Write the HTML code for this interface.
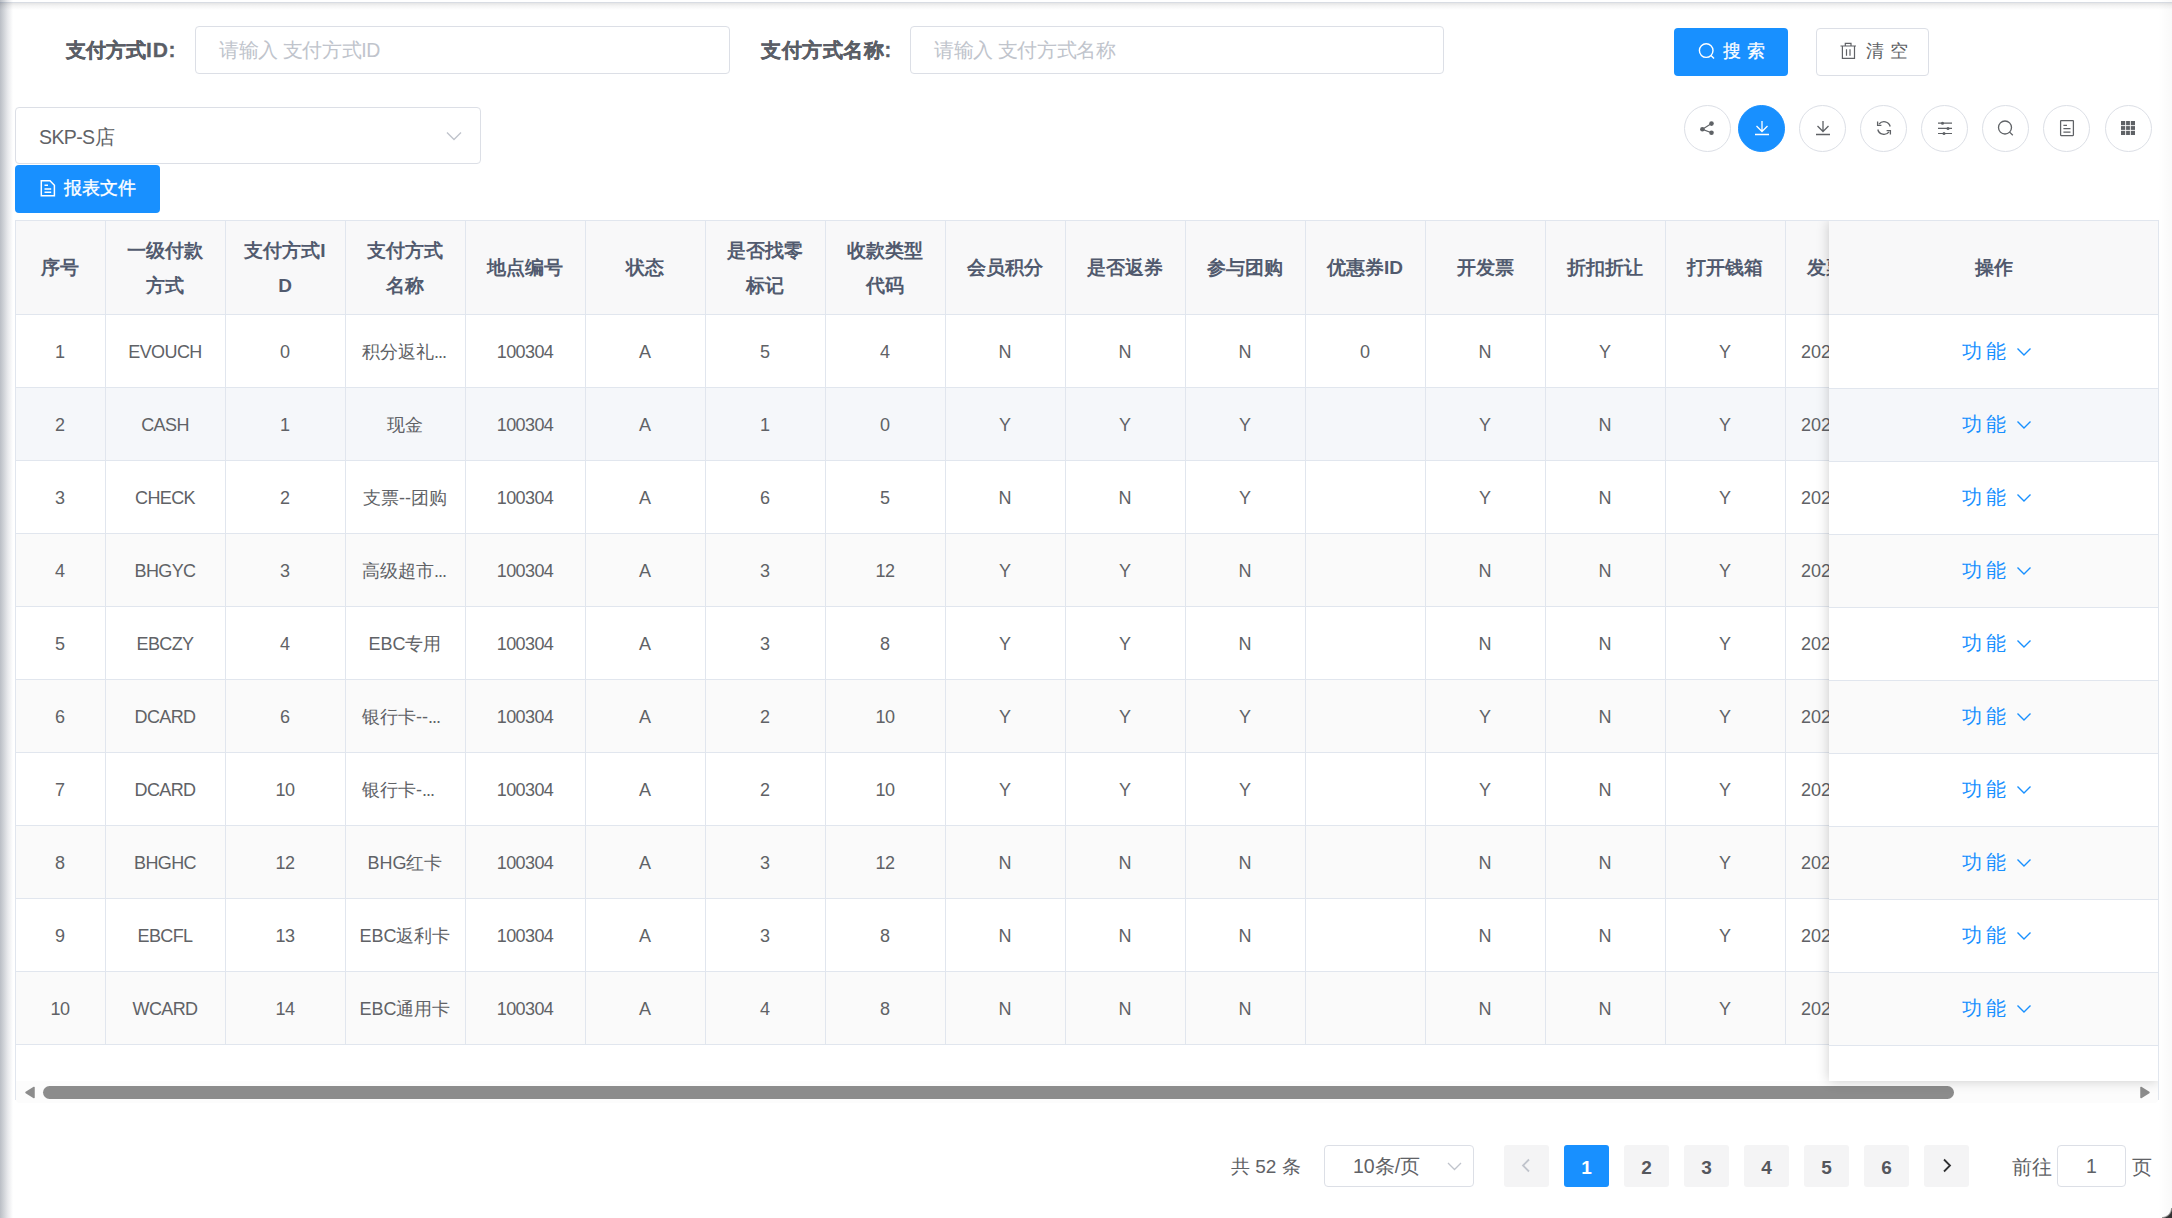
<!DOCTYPE html><html><head><meta charset="utf-8"><style>
*{box-sizing:border-box;margin:0;padding:0}
html,body{width:2172px;height:1218px;overflow:hidden;background:#fff;font-family:"Liberation Sans",sans-serif;color:#606266}
.abs{position:absolute}
.lbl{position:absolute;font-size:20px;font-weight:bold;color:#5a5e66;-webkit-text-stroke:0.3px #5a5e66;line-height:24px;white-space:nowrap}
.inp{position:absolute;border:1px solid #dcdfe6;border-radius:4px;background:#fff}
.ph{position:absolute;font-size:19.5px;color:#c0c4cc;line-height:24px;white-space:nowrap;letter-spacing:-0.4px}
.btn{position:absolute;border-radius:4px;font-size:19.5px;line-height:24px;white-space:nowrap}
.circ{position:absolute;top:105px;width:47px;height:47px;border:1px solid #dcdfe6;border-radius:50%;background:#fff}
.circ svg{position:absolute;left:50%;top:50%;transform:translate(-50%,-50%)}
.vl{position:absolute;width:1px;background:#e1e6ee}
.hl{position:absolute;height:1px;background:#e1e6ee}
.th{position:absolute;text-align:center;font-size:19px;font-weight:bold;color:#515a6e;line-height:35px;white-space:nowrap}
.td{position:absolute;text-align:center;font-size:18px;color:#606266;line-height:24px;white-space:nowrap}
.pg{position:absolute;top:1145px;width:45px;height:42px;background:#f4f4f5;border-radius:3px;text-align:center;font-size:19px;font-weight:bold;line-height:45px;color:#54575d}
</style></head><body>
<div class="lbl" style="left:66px;top:38px">支付方式<span style="letter-spacing:0.8px;font-size:21px">ID:</span></div>
<div class="inp" style="left:195px;top:26px;width:535px;height:48px"></div>
<div class="ph" style="left:219px;top:38px">请输入 支付方式ID</div>
<div class="lbl" style="left:761px;top:38px;letter-spacing:0.6px">支付方式名称<span style="letter-spacing:1px">:</span></div>
<div class="inp" style="left:910px;top:26px;width:534px;height:48px"></div>
<div class="ph" style="left:934px;top:38px">请输入 支付方式名称</div>
<div class="btn" style="left:1674px;top:28px;width:114px;height:48px;background:#1890ff"></div>
<svg class="abs" style="left:1698px;top:42px" width="18" height="18" viewBox="0 0 18 18"><circle cx="8.2" cy="8.6" r="6.8" fill="none" stroke="#fff" stroke-width="1.4"/><path d="M13 13.4L16 16.6" stroke="#fff" stroke-width="1.4"/></svg>
<div class="btn" style="left:1723px;top:39px;color:#fff;letter-spacing:5.5px;font-size:17.5px;font-weight:400;-webkit-text-stroke:0.25px #fff">搜索</div>
<div class="btn" style="left:1816px;top:28px;width:113px;height:48px;border:1px solid #dcdfe6;background:#fff"></div>
<svg class="abs" style="left:1840px;top:42px" width="17" height="18" viewBox="0 0 17 18"><path d="M0.5 4H16M5.3 4V1.3H11V4M2.4 4V16.4H14.5V4M6.5 7.2V13.7M10 7.2V13.7" fill="none" stroke="#606266" stroke-width="1.2"/></svg>
<div class="btn" style="left:1866px;top:39px;color:#606266;letter-spacing:6px;font-size:17.5px;font-weight:400">清空</div>
<div class="inp" style="left:15px;top:107px;width:466px;height:57px"></div>
<div class="abs" style="left:39px;top:125px;font-size:19.5px;line-height:24px;color:#606266"><span style="letter-spacing:-0.6px">SKP-S</span>店</div>
<svg class="abs" style="left:446px;top:131px" width="16" height="10" viewBox="0 0 16 10"><path d="M1 1.5L8 8.5L15 1.5" fill="none" stroke="#c0c4cc" stroke-width="1.4"/></svg>
<div class="btn" style="left:15px;top:165px;width:145px;height:48px;background:#1890ff"></div>
<svg class="abs" style="left:40px;top:180px" width="16" height="17" viewBox="0 0 16 17"><path d="M1.3 0.8H10L14.4 5.2V15.8H1.3Z" fill="none" stroke="#fff" stroke-width="1.5"/><path d="M4.5 9H11.2M4.5 12.2H11.2M4.5 5.2H8" stroke="#fff" stroke-width="1.5"/></svg>
<div class="btn" style="left:64px;top:176px;color:#fff;font-size:18px;font-weight:400;-webkit-text-stroke:0.4px #fff">报表文件</div>
<div class="circ" style="left:1684px"></div>
<svg class="abs" style="left:1698px;top:119px" width="18" height="18" viewBox="0 0 18 18"><path d="M13.5 4.6L4.4 10.3L13.5 13.8" fill="none" stroke="#5f6266" stroke-width="1.2"/><circle cx="13.5" cy="4.6" r="2.3" fill="#5f6266"/><circle cx="4.4" cy="10.3" r="2.3" fill="#5f6266"/><circle cx="13.5" cy="13.8" r="2.3" fill="#5f6266"/></svg>
<div class="circ" style="left:1738px;background:#1890ff;border-color:#1890ff"></div>
<svg class="abs" style="left:1753px;top:119px" width="18" height="18" viewBox="0 0 18 18"><path d="M9 2V12M3.5 7L9 12.5L14.5 7M2 15.5H16" fill="none" stroke="#fff" stroke-width="1.3"/></svg>
<div class="circ" style="left:1799px"></div>
<svg class="abs" style="left:1814px;top:119px" width="18" height="18" viewBox="0 0 18 18"><path d="M9 2V12M3.5 7L9 12.5L14.5 7M2 15.5H16" fill="none" stroke="#5f6266" stroke-width="1.3"/></svg>
<div class="circ" style="left:1860px"></div>
<svg class="abs" style="left:1875px;top:119px" width="18" height="18" viewBox="0 0 18 18"><path d="M15.2 7.5A6.3 6.3 0 0 0 4 5.2M2.8 10.5A6.3 6.3 0 0 0 14 12.8" fill="none" stroke="#5f6266" stroke-width="1.3"/><path d="M2.6 2.5V6.3H6.4M15.4 15.5V11.7H11.6" fill="none" stroke="#5f6266" stroke-width="1.3"/></svg>
<div class="circ" style="left:1921px"></div>
<svg class="abs" style="left:1936px;top:119px" width="18" height="18" viewBox="0 0 18 18"><path d="M2 4.2H16M2 9.4H16M2 14.5H16" stroke="#5f6266" stroke-width="1.2"/><circle cx="6.5" cy="4.2" r="1.5" fill="#5f6266"/><circle cx="12" cy="9.4" r="1.5" fill="#5f6266"/><circle cx="8" cy="14.5" r="1.5" fill="#5f6266"/></svg>
<div class="circ" style="left:1982px"></div>
<svg class="abs" style="left:1996px;top:119px" width="18" height="18" viewBox="0 0 18 18"><circle cx="9" cy="8.5" r="6.5" fill="none" stroke="#5f6266" stroke-width="1.3"/><path d="M13.6 13.1L16.8 16.3" stroke="#5f6266" stroke-width="1.3"/></svg>
<div class="circ" style="left:2043px"></div>
<svg class="abs" style="left:2058px;top:119px" width="18" height="18" viewBox="0 0 18 18"><rect x="2.6" y="1.6" width="12.8" height="15" rx="0.5" fill="none" stroke="#5f6266" stroke-width="1.25"/><path d="M5.4 6.4H9M5.4 9.6H12.5M5.4 13.2H12.5" stroke="#5f6266" stroke-width="1.2"/></svg>
<div class="circ" style="left:2105px"></div>
<svg class="abs" style="left:2119px;top:119px" width="18" height="18" viewBox="0 0 18 18"><path d="M2 2H16V16H2Z" fill="#5f6266"/><path d="M6.6 2V16M11.4 2V16M2 6.6H16M2 11.4H16" stroke="#fff" stroke-width="0.9"/></svg>
<div class="abs" style="left:15px;top:220px;width:2143px;height:94px;background:#f8f8f9"></div>
<div class="abs" style="left:15px;top:387px;width:2143px;height:73px;background:#f5f7fa"></div>
<div class="abs" style="left:15px;top:533px;width:2143px;height:73px;background:#fafafa"></div>
<div class="abs" style="left:15px;top:679px;width:2143px;height:73px;background:#fafafa"></div>
<div class="abs" style="left:15px;top:825px;width:2143px;height:73px;background:#fafafa"></div>
<div class="abs" style="left:15px;top:971px;width:2143px;height:73px;background:#fafafa"></div>
<div class="th" style="left:15px;top:250px;width:90px">序号</div>
<div class="th" style="left:105px;top:233px;width:120px">一级付款<br>方式</div>
<div class="th" style="left:225px;top:233px;width:120px">支付方式I<br>D</div>
<div class="th" style="left:345px;top:233px;width:120px">支付方式<br>名称</div>
<div class="th" style="left:465px;top:250px;width:120px">地点编号</div>
<div class="th" style="left:585px;top:250px;width:120px">状态</div>
<div class="th" style="left:705px;top:233px;width:120px">是否找零<br>标记</div>
<div class="th" style="left:825px;top:233px;width:120px">收款类型<br>代码</div>
<div class="th" style="left:945px;top:250px;width:120px">会员积分</div>
<div class="th" style="left:1065px;top:250px;width:120px">是否返券</div>
<div class="th" style="left:1185px;top:250px;width:120px">参与团购</div>
<div class="th" style="left:1305px;top:250px;width:120px">优惠券ID</div>
<div class="th" style="left:1425px;top:250px;width:120px">开发票</div>
<div class="th" style="left:1545px;top:250px;width:120px">折扣折让</div>
<div class="th" style="left:1665px;top:250px;width:120px">打开钱箱</div>
<div class="th" style="left:1785px;top:250px;width:120px">发票类型</div>
<div class="td" style="left:15px;top:340px;width:90px">1</div>
<div class="td" style="left:105px;top:340px;width:120px;letter-spacing:-0.6px">EVOUCH</div>
<div class="td" style="left:225px;top:340px;width:120px">0</div>
<div class="td" style="left:362px;top:340px;text-align:left">积分返礼<span style="letter-spacing:-1px">...</span></div>
<div class="td" style="left:465px;top:340px;width:120px;letter-spacing:-0.6px">100304</div>
<div class="td" style="left:585px;top:340px;width:120px">A</div>
<div class="td" style="left:705px;top:340px;width:120px">5</div>
<div class="td" style="left:825px;top:340px;width:120px">4</div>
<div class="td" style="left:945px;top:340px;width:120px">N</div>
<div class="td" style="left:1065px;top:340px;width:120px">N</div>
<div class="td" style="left:1185px;top:340px;width:120px">N</div>
<div class="td" style="left:1305px;top:340px;width:120px">0</div>
<div class="td" style="left:1425px;top:340px;width:120px">N</div>
<div class="td" style="left:1545px;top:340px;width:120px">Y</div>
<div class="td" style="left:1665px;top:340px;width:120px">Y</div>
<div class="td" style="left:1801px;top:340px;text-align:left">2023</div>
<div class="td" style="left:15px;top:413px;width:90px">2</div>
<div class="td" style="left:105px;top:413px;width:120px;letter-spacing:-0.6px">CASH</div>
<div class="td" style="left:225px;top:413px;width:120px">1</div>
<div class="td" style="left:345px;top:413px;width:120px">现金</div>
<div class="td" style="left:465px;top:413px;width:120px;letter-spacing:-0.6px">100304</div>
<div class="td" style="left:585px;top:413px;width:120px">A</div>
<div class="td" style="left:705px;top:413px;width:120px">1</div>
<div class="td" style="left:825px;top:413px;width:120px">0</div>
<div class="td" style="left:945px;top:413px;width:120px">Y</div>
<div class="td" style="left:1065px;top:413px;width:120px">Y</div>
<div class="td" style="left:1185px;top:413px;width:120px">Y</div>
<div class="td" style="left:1425px;top:413px;width:120px">Y</div>
<div class="td" style="left:1545px;top:413px;width:120px">N</div>
<div class="td" style="left:1665px;top:413px;width:120px">Y</div>
<div class="td" style="left:1801px;top:413px;text-align:left">2023</div>
<div class="td" style="left:15px;top:486px;width:90px">3</div>
<div class="td" style="left:105px;top:486px;width:120px;letter-spacing:-0.6px">CHECK</div>
<div class="td" style="left:225px;top:486px;width:120px">2</div>
<div class="td" style="left:345px;top:486px;width:120px">支票--团购</div>
<div class="td" style="left:465px;top:486px;width:120px;letter-spacing:-0.6px">100304</div>
<div class="td" style="left:585px;top:486px;width:120px">A</div>
<div class="td" style="left:705px;top:486px;width:120px">6</div>
<div class="td" style="left:825px;top:486px;width:120px">5</div>
<div class="td" style="left:945px;top:486px;width:120px">N</div>
<div class="td" style="left:1065px;top:486px;width:120px">N</div>
<div class="td" style="left:1185px;top:486px;width:120px">Y</div>
<div class="td" style="left:1425px;top:486px;width:120px">Y</div>
<div class="td" style="left:1545px;top:486px;width:120px">N</div>
<div class="td" style="left:1665px;top:486px;width:120px">Y</div>
<div class="td" style="left:1801px;top:486px;text-align:left">2023</div>
<div class="td" style="left:15px;top:559px;width:90px">4</div>
<div class="td" style="left:105px;top:559px;width:120px;letter-spacing:-0.6px">BHGYC</div>
<div class="td" style="left:225px;top:559px;width:120px">3</div>
<div class="td" style="left:362px;top:559px;text-align:left">高级超市<span style="letter-spacing:-1px">...</span></div>
<div class="td" style="left:465px;top:559px;width:120px;letter-spacing:-0.6px">100304</div>
<div class="td" style="left:585px;top:559px;width:120px">A</div>
<div class="td" style="left:705px;top:559px;width:120px">3</div>
<div class="td" style="left:825px;top:559px;width:120px;letter-spacing:-0.6px">12</div>
<div class="td" style="left:945px;top:559px;width:120px">Y</div>
<div class="td" style="left:1065px;top:559px;width:120px">Y</div>
<div class="td" style="left:1185px;top:559px;width:120px">N</div>
<div class="td" style="left:1425px;top:559px;width:120px">N</div>
<div class="td" style="left:1545px;top:559px;width:120px">N</div>
<div class="td" style="left:1665px;top:559px;width:120px">Y</div>
<div class="td" style="left:1801px;top:559px;text-align:left">2023</div>
<div class="td" style="left:15px;top:632px;width:90px">5</div>
<div class="td" style="left:105px;top:632px;width:120px;letter-spacing:-0.6px">EBCZY</div>
<div class="td" style="left:225px;top:632px;width:120px">4</div>
<div class="td" style="left:345px;top:632px;width:120px">EBC专用</div>
<div class="td" style="left:465px;top:632px;width:120px;letter-spacing:-0.6px">100304</div>
<div class="td" style="left:585px;top:632px;width:120px">A</div>
<div class="td" style="left:705px;top:632px;width:120px">3</div>
<div class="td" style="left:825px;top:632px;width:120px">8</div>
<div class="td" style="left:945px;top:632px;width:120px">Y</div>
<div class="td" style="left:1065px;top:632px;width:120px">Y</div>
<div class="td" style="left:1185px;top:632px;width:120px">N</div>
<div class="td" style="left:1425px;top:632px;width:120px">N</div>
<div class="td" style="left:1545px;top:632px;width:120px">N</div>
<div class="td" style="left:1665px;top:632px;width:120px">Y</div>
<div class="td" style="left:1801px;top:632px;text-align:left">2023</div>
<div class="td" style="left:15px;top:705px;width:90px">6</div>
<div class="td" style="left:105px;top:705px;width:120px;letter-spacing:-0.6px">DCARD</div>
<div class="td" style="left:225px;top:705px;width:120px">6</div>
<div class="td" style="left:362px;top:705px;text-align:left">银行卡--<span style="letter-spacing:-1px">...</span></div>
<div class="td" style="left:465px;top:705px;width:120px;letter-spacing:-0.6px">100304</div>
<div class="td" style="left:585px;top:705px;width:120px">A</div>
<div class="td" style="left:705px;top:705px;width:120px">2</div>
<div class="td" style="left:825px;top:705px;width:120px;letter-spacing:-0.6px">10</div>
<div class="td" style="left:945px;top:705px;width:120px">Y</div>
<div class="td" style="left:1065px;top:705px;width:120px">Y</div>
<div class="td" style="left:1185px;top:705px;width:120px">Y</div>
<div class="td" style="left:1425px;top:705px;width:120px">Y</div>
<div class="td" style="left:1545px;top:705px;width:120px">N</div>
<div class="td" style="left:1665px;top:705px;width:120px">Y</div>
<div class="td" style="left:1801px;top:705px;text-align:left">2023</div>
<div class="td" style="left:15px;top:778px;width:90px">7</div>
<div class="td" style="left:105px;top:778px;width:120px;letter-spacing:-0.6px">DCARD</div>
<div class="td" style="left:225px;top:778px;width:120px;letter-spacing:-0.6px">10</div>
<div class="td" style="left:362px;top:778px;text-align:left">银行卡-<span style="letter-spacing:-1px">...</span></div>
<div class="td" style="left:465px;top:778px;width:120px;letter-spacing:-0.6px">100304</div>
<div class="td" style="left:585px;top:778px;width:120px">A</div>
<div class="td" style="left:705px;top:778px;width:120px">2</div>
<div class="td" style="left:825px;top:778px;width:120px;letter-spacing:-0.6px">10</div>
<div class="td" style="left:945px;top:778px;width:120px">Y</div>
<div class="td" style="left:1065px;top:778px;width:120px">Y</div>
<div class="td" style="left:1185px;top:778px;width:120px">Y</div>
<div class="td" style="left:1425px;top:778px;width:120px">Y</div>
<div class="td" style="left:1545px;top:778px;width:120px">N</div>
<div class="td" style="left:1665px;top:778px;width:120px">Y</div>
<div class="td" style="left:1801px;top:778px;text-align:left">2023</div>
<div class="td" style="left:15px;top:851px;width:90px">8</div>
<div class="td" style="left:105px;top:851px;width:120px;letter-spacing:-0.6px">BHGHC</div>
<div class="td" style="left:225px;top:851px;width:120px;letter-spacing:-0.6px">12</div>
<div class="td" style="left:345px;top:851px;width:120px">BHG红卡</div>
<div class="td" style="left:465px;top:851px;width:120px;letter-spacing:-0.6px">100304</div>
<div class="td" style="left:585px;top:851px;width:120px">A</div>
<div class="td" style="left:705px;top:851px;width:120px">3</div>
<div class="td" style="left:825px;top:851px;width:120px;letter-spacing:-0.6px">12</div>
<div class="td" style="left:945px;top:851px;width:120px">N</div>
<div class="td" style="left:1065px;top:851px;width:120px">N</div>
<div class="td" style="left:1185px;top:851px;width:120px">N</div>
<div class="td" style="left:1425px;top:851px;width:120px">N</div>
<div class="td" style="left:1545px;top:851px;width:120px">N</div>
<div class="td" style="left:1665px;top:851px;width:120px">Y</div>
<div class="td" style="left:1801px;top:851px;text-align:left">2023</div>
<div class="td" style="left:15px;top:924px;width:90px">9</div>
<div class="td" style="left:105px;top:924px;width:120px;letter-spacing:-0.6px">EBCFL</div>
<div class="td" style="left:225px;top:924px;width:120px;letter-spacing:-0.6px">13</div>
<div class="td" style="left:345px;top:924px;width:120px">EBC返利卡</div>
<div class="td" style="left:465px;top:924px;width:120px;letter-spacing:-0.6px">100304</div>
<div class="td" style="left:585px;top:924px;width:120px">A</div>
<div class="td" style="left:705px;top:924px;width:120px">3</div>
<div class="td" style="left:825px;top:924px;width:120px">8</div>
<div class="td" style="left:945px;top:924px;width:120px">N</div>
<div class="td" style="left:1065px;top:924px;width:120px">N</div>
<div class="td" style="left:1185px;top:924px;width:120px">N</div>
<div class="td" style="left:1425px;top:924px;width:120px">N</div>
<div class="td" style="left:1545px;top:924px;width:120px">N</div>
<div class="td" style="left:1665px;top:924px;width:120px">Y</div>
<div class="td" style="left:1801px;top:924px;text-align:left">2023</div>
<div class="td" style="left:15px;top:997px;width:90px;letter-spacing:-0.6px">10</div>
<div class="td" style="left:105px;top:997px;width:120px;letter-spacing:-0.6px">WCARD</div>
<div class="td" style="left:225px;top:997px;width:120px;letter-spacing:-0.6px">14</div>
<div class="td" style="left:345px;top:997px;width:120px">EBC通用卡</div>
<div class="td" style="left:465px;top:997px;width:120px;letter-spacing:-0.6px">100304</div>
<div class="td" style="left:585px;top:997px;width:120px">A</div>
<div class="td" style="left:705px;top:997px;width:120px">4</div>
<div class="td" style="left:825px;top:997px;width:120px">8</div>
<div class="td" style="left:945px;top:997px;width:120px">N</div>
<div class="td" style="left:1065px;top:997px;width:120px">N</div>
<div class="td" style="left:1185px;top:997px;width:120px">N</div>
<div class="td" style="left:1425px;top:997px;width:120px">N</div>
<div class="td" style="left:1545px;top:997px;width:120px">N</div>
<div class="td" style="left:1665px;top:997px;width:120px">Y</div>
<div class="td" style="left:1801px;top:997px;text-align:left">2023</div>
<div class="vl" style="left:15px;top:220px;height:825px"></div>
<div class="vl" style="left:105px;top:220px;height:825px"></div>
<div class="vl" style="left:225px;top:220px;height:825px"></div>
<div class="vl" style="left:345px;top:220px;height:825px"></div>
<div class="vl" style="left:465px;top:220px;height:825px"></div>
<div class="vl" style="left:585px;top:220px;height:825px"></div>
<div class="vl" style="left:705px;top:220px;height:825px"></div>
<div class="vl" style="left:825px;top:220px;height:825px"></div>
<div class="vl" style="left:945px;top:220px;height:825px"></div>
<div class="vl" style="left:1065px;top:220px;height:825px"></div>
<div class="vl" style="left:1185px;top:220px;height:825px"></div>
<div class="vl" style="left:1305px;top:220px;height:825px"></div>
<div class="vl" style="left:1425px;top:220px;height:825px"></div>
<div class="vl" style="left:1545px;top:220px;height:825px"></div>
<div class="vl" style="left:1665px;top:220px;height:825px"></div>
<div class="vl" style="left:1785px;top:220px;height:825px"></div>
<div class="vl" style="left:15px;top:1044px;height:56px"></div>
<div class="hl" style="left:15px;top:220px;width:2144px"></div>
<div class="hl" style="left:15px;top:314px;width:2143px"></div>
<div class="hl" style="left:15px;top:387px;width:2143px"></div>
<div class="hl" style="left:15px;top:460px;width:2143px"></div>
<div class="hl" style="left:15px;top:533px;width:2143px"></div>
<div class="hl" style="left:15px;top:606px;width:2143px"></div>
<div class="hl" style="left:15px;top:679px;width:2143px"></div>
<div class="hl" style="left:15px;top:752px;width:2143px"></div>
<div class="hl" style="left:15px;top:825px;width:2143px"></div>
<div class="hl" style="left:15px;top:898px;width:2143px"></div>
<div class="hl" style="left:15px;top:971px;width:2143px"></div>
<div class="hl" style="left:15px;top:1044px;width:2143px"></div>
<div class="abs" style="left:16px;top:1081px;width:2142px;height:22px;background:#fcfcfc;border-radius:0 0 4px 4px"></div>
<svg class="abs" style="left:24px;top:1086px" width="12" height="13" viewBox="0 0 12 13"><path d="M10 1.5V11.5L2 6.5Z" fill="#8c8c8c" stroke="#8c8c8c" stroke-width="1.5" stroke-linejoin="round"/></svg>
<div class="abs" style="left:43px;top:1086px;width:1911px;height:13px;border-radius:7px;background:#8c8c8c"></div>
<svg class="abs" style="left:2139px;top:1086px" width="12" height="13" viewBox="0 0 12 13"><path d="M2 1.5V11.5L10 6.5Z" fill="#8c8c8c" stroke="#8c8c8c" stroke-width="1.5" stroke-linejoin="round"/></svg>
<div class="abs" style="left:1829px;top:221px;width:329px;height:860px;background:#fff;box-shadow:0 0 12px rgba(0,0,0,0.2);clip-path:inset(0 0 -20px -20px)"></div>
<div class="abs" style="left:1829px;top:221px;width:329px;height:860px;background:#fff"></div>
<div class="abs" style="left:1829px;top:221px;width:329px;height:93px;background:#f8f8f9"></div>
<div class="abs" style="left:1829px;top:314px;width:329px;height:74px;background:#fff"></div>
<div class="hl" style="left:1829px;top:314px;width:329px"></div>
<div class="abs" style="left:1962px;top:339px;font-size:19.5px;line-height:24px;color:#1890ff;letter-spacing:3.5px">功能</div>
<svg class="abs" style="left:2016px;top:347px" width="16" height="10" viewBox="0 0 16 10"><path d="M1.5 1.5L8 8L14.5 1.5" fill="none" stroke="#1890ff" stroke-width="1.4"/></svg>
<div class="abs" style="left:1829px;top:388px;width:329px;height:73px;background:#f5f7fa"></div>
<div class="hl" style="left:1829px;top:388px;width:329px"></div>
<div class="abs" style="left:1962px;top:412px;font-size:19.5px;line-height:24px;color:#1890ff;letter-spacing:3.5px">功能</div>
<svg class="abs" style="left:2016px;top:420px" width="16" height="10" viewBox="0 0 16 10"><path d="M1.5 1.5L8 8L14.5 1.5" fill="none" stroke="#1890ff" stroke-width="1.4"/></svg>
<div class="abs" style="left:1829px;top:461px;width:329px;height:73px;background:#fff"></div>
<div class="hl" style="left:1829px;top:461px;width:329px"></div>
<div class="abs" style="left:1962px;top:485px;font-size:19.5px;line-height:24px;color:#1890ff;letter-spacing:3.5px">功能</div>
<svg class="abs" style="left:2016px;top:493px" width="16" height="10" viewBox="0 0 16 10"><path d="M1.5 1.5L8 8L14.5 1.5" fill="none" stroke="#1890ff" stroke-width="1.4"/></svg>
<div class="abs" style="left:1829px;top:534px;width:329px;height:73px;background:#fafafa"></div>
<div class="hl" style="left:1829px;top:534px;width:329px"></div>
<div class="abs" style="left:1962px;top:558px;font-size:19.5px;line-height:24px;color:#1890ff;letter-spacing:3.5px">功能</div>
<svg class="abs" style="left:2016px;top:566px" width="16" height="10" viewBox="0 0 16 10"><path d="M1.5 1.5L8 8L14.5 1.5" fill="none" stroke="#1890ff" stroke-width="1.4"/></svg>
<div class="abs" style="left:1829px;top:607px;width:329px;height:73px;background:#fff"></div>
<div class="hl" style="left:1829px;top:607px;width:329px"></div>
<div class="abs" style="left:1962px;top:631px;font-size:19.5px;line-height:24px;color:#1890ff;letter-spacing:3.5px">功能</div>
<svg class="abs" style="left:2016px;top:639px" width="16" height="10" viewBox="0 0 16 10"><path d="M1.5 1.5L8 8L14.5 1.5" fill="none" stroke="#1890ff" stroke-width="1.4"/></svg>
<div class="abs" style="left:1829px;top:680px;width:329px;height:73px;background:#fafafa"></div>
<div class="hl" style="left:1829px;top:680px;width:329px"></div>
<div class="abs" style="left:1962px;top:704px;font-size:19.5px;line-height:24px;color:#1890ff;letter-spacing:3.5px">功能</div>
<svg class="abs" style="left:2016px;top:712px" width="16" height="10" viewBox="0 0 16 10"><path d="M1.5 1.5L8 8L14.5 1.5" fill="none" stroke="#1890ff" stroke-width="1.4"/></svg>
<div class="abs" style="left:1829px;top:753px;width:329px;height:73px;background:#fff"></div>
<div class="hl" style="left:1829px;top:753px;width:329px"></div>
<div class="abs" style="left:1962px;top:777px;font-size:19.5px;line-height:24px;color:#1890ff;letter-spacing:3.5px">功能</div>
<svg class="abs" style="left:2016px;top:785px" width="16" height="10" viewBox="0 0 16 10"><path d="M1.5 1.5L8 8L14.5 1.5" fill="none" stroke="#1890ff" stroke-width="1.4"/></svg>
<div class="abs" style="left:1829px;top:826px;width:329px;height:73px;background:#fafafa"></div>
<div class="hl" style="left:1829px;top:826px;width:329px"></div>
<div class="abs" style="left:1962px;top:850px;font-size:19.5px;line-height:24px;color:#1890ff;letter-spacing:3.5px">功能</div>
<svg class="abs" style="left:2016px;top:858px" width="16" height="10" viewBox="0 0 16 10"><path d="M1.5 1.5L8 8L14.5 1.5" fill="none" stroke="#1890ff" stroke-width="1.4"/></svg>
<div class="abs" style="left:1829px;top:899px;width:329px;height:73px;background:#fff"></div>
<div class="hl" style="left:1829px;top:899px;width:329px"></div>
<div class="abs" style="left:1962px;top:923px;font-size:19.5px;line-height:24px;color:#1890ff;letter-spacing:3.5px">功能</div>
<svg class="abs" style="left:2016px;top:931px" width="16" height="10" viewBox="0 0 16 10"><path d="M1.5 1.5L8 8L14.5 1.5" fill="none" stroke="#1890ff" stroke-width="1.4"/></svg>
<div class="abs" style="left:1829px;top:972px;width:329px;height:73px;background:#fafafa"></div>
<div class="hl" style="left:1829px;top:972px;width:329px"></div>
<div class="abs" style="left:1962px;top:996px;font-size:19.5px;line-height:24px;color:#1890ff;letter-spacing:3.5px">功能</div>
<svg class="abs" style="left:2016px;top:1004px" width="16" height="10" viewBox="0 0 16 10"><path d="M1.5 1.5L8 8L14.5 1.5" fill="none" stroke="#1890ff" stroke-width="1.4"/></svg>
<div class="hl" style="left:1829px;top:1045px;width:329px"></div>
<div class="th" style="left:1829px;top:250px;width:329px">操作</div>
<div class="vl" style="left:2158px;top:220px;height:880px"></div>
<div class="abs" style="left:1231px;top:1155px;font-size:19px;line-height:24px;color:#606266;white-space:nowrap">共 52 条</div>
<div class="inp" style="left:1324px;top:1145px;width:150px;height:42px"></div>
<div class="abs" style="left:1353px;top:1154px;font-size:19.5px;line-height:24px;color:#606266;white-space:nowrap">10条/页</div>
<svg class="abs" style="left:1447px;top:1162px" width="15" height="9" viewBox="0 0 15 9"><path d="M1 1L7.5 7.5L14 1" fill="none" stroke="#c0c4cc" stroke-width="1.3"/></svg>
<div class="pg" style="left:1504px;color:#c0c4cc"><svg style="position:absolute;left:17px;top:13px" width="10" height="15" viewBox="0 0 10 15"><path d="M8 1.5L2 7.5L8 13.5" fill="none" stroke="#c0c4cc" stroke-width="1.8"/></svg></div>
<div class="pg" style="left:1564px;background:#1890ff;color:#fff">1</div>
<div class="pg" style="left:1624px">2</div>
<div class="pg" style="left:1684px">3</div>
<div class="pg" style="left:1744px">4</div>
<div class="pg" style="left:1804px">5</div>
<div class="pg" style="left:1864px">6</div>
<div class="pg" style="left:1924px"><svg style="position:absolute;left:18px;top:13px" width="10" height="15" viewBox="0 0 10 15"><path d="M2 1.5L8 7.5L2 13.5" fill="none" stroke="#303133" stroke-width="1.8"/></svg></div>
<div class="abs" style="left:2012px;top:1155px;font-size:19.5px;line-height:24px;color:#606266">前往</div>
<div class="inp" style="left:2057px;top:1145px;width:69px;height:42px;text-align:center;font-size:19.5px;line-height:40px;color:#606266">1</div>
<div class="abs" style="left:2132px;top:1155px;font-size:19.5px;line-height:24px;color:#606266">页</div>
<div class="abs" style="left:0;top:0;width:13px;height:1218px;background:linear-gradient(to right,#babec5,#cdd0d5 25%,#e8e9ec 60%,rgba(255,255,255,0))"></div>
<div class="abs" style="left:0;top:2px;width:2172px;height:1px;background:rgba(40,60,100,0.18)"></div><div class="abs" style="left:0;top:3px;width:2172px;height:7px;background:linear-gradient(to bottom,rgba(0,0,0,0.1),rgba(0,0,0,0.045) 40%,rgba(0,0,0,0))"></div>
<div class="abs" style="left:2158px;top:0;width:14px;height:1218px;background:linear-gradient(to right,rgba(0,0,0,0),rgba(0,0,0,0.025))"></div>
<div class="abs" style="left:2162px;top:1208px;width:10px;height:10px;background:radial-gradient(circle at 0 0,rgba(51,51,51,0) 8.5px,#333 10.5px)"></div>
</body></html>
